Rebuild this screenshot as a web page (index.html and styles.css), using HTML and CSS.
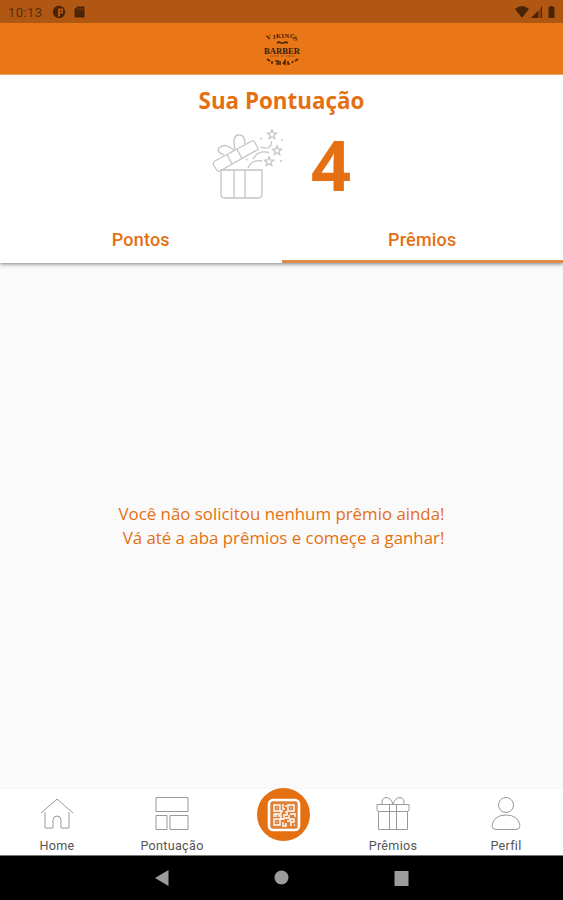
FILE: index.html
```html
<!DOCTYPE html>
<html lang="pt-BR">
<head>
<meta charset="utf-8">
<title>Sua Pontuação</title>
<link rel="stylesheet" href="styles.css">
</head>
<body>
<div class="app">
  <div class="status">
    <span class="clock">10:13</span>
    <svg class="notices" width="36" height="16" viewBox="0 0 36 16">
      <circle cx="7" cy="8" r="6.2"/><path class="cut" d="M6 4.500h5v5H8v3H6z"/><path d="M8 6.500h1.500v1.500H8z"/>
      <path d="M25.500 2.500h6q1 0 1 1v9q0 1-1 1h-8q-1 0-1-1V5.500z"/><path class="slot" d="M26 4v2.500M28.200 4v2.500M30.400 4v2.500"/>
    </svg>
    <svg class="signals" width="44" height="16" viewBox="0 0 44 16">
      <path d="M1 5q7-6 14 0L8 14z"/><path class="faint" d="M28 3v11H17z"/><path d="M24 7v7h-7z"/><path d="M27 3l1-1v12h-1z"/>
      <path d="M34.500 3h1.500V2h3v1h1.500v11h-6z"/>
    </svg>
  </div>
  <header class="topbar">
    <svg width="40" height="40" viewBox="0 0 40 40">
      <path class="thick" d="M15 14l2-1 2 1h3l2-1 2 1"/>
      <path class="thin" d="M8 27h9M24 27h9M19 27h3"/>
      <g class="logo">
        <text x="5" y="11" font-size="6.500" transform="rotate(-18 5 11)">V</text><text x="11" y="9.500" font-size="6.500">I</text><text x="14" y="9" font-size="6.500">K</text><text x="19.500" y="9" font-size="6.500">I</text><text x="22.500" y="9" font-size="6.500">N</text><text x="27.500" y="9" font-size="6.500" transform="rotate(12 27 9)">G</text><text x="31.500" y="11" font-size="6.500" transform="rotate(18 31 10)">S</text>
        <text x="2" y="24.500" font-size="9" textLength="36" lengthAdjust="spacingAndGlyphs">BARBER</text>
      </g>
      <path class="thick" d="M5 30l3 2M10 32v3M13 32h3v3h-2M18 32v4M21 35l2-3v4M26 32v3h2M30 34l1-2M33 32l3-2"/>
    </svg>
  </header>
  <section class="score">
    <h1>Sua Pontuação</h1>
    <div class="points">
      <svg class="gift" width="74" height="72" viewBox="0 0 74 72">
        <path d="M9 42h41v24q0 4-4 4H13q-4 0-4-4zM22 42v28M33 42v28"/>
        <path d="M1.500 37q-1-2.500 1.500-4L40 13q1.500-1 2.500 1l3.500 6q.5 1.500-1 2L8 43q-2.500 1-4-2zM15 26.500l5 9.500M25 21l5 9.500"/>
        <path d="M12 27q-8-3-5-7 5-5 12 0l3 2M23 21q-3-13 3-14 7-1 7 9"/>
        <path d="M48.500 19q11 4 11-6M41 31q5-9 16-6.500M36 40q4-9 14-7"/>
        <path d="M60 2l1.300 3 3.200.3-2.500 2 .8 3.200-2.800-1.700-2.800 1.700.8-3.200-2.500-2 3.200-.3zM65 18l1.300 3 3.200.3-2.500 2 .8 3.200-2.800-1.700-2.800 1.700.8-3.200-2.500-2 3.200-.3zM57 29l1.300 3 3.200.3-2.500 2 .8 3.200-2.800-1.700-2.800 1.700.8-3.200-2.500-2 3.200-.3zM48 10.500h2M69 12h2M68 33h2M34 31.500h1.500"/>
      </svg>
      <strong>4</strong>
    </div>
  </section>
  <nav class="tabs">
    <span class="tab">Pontos</span>
    <span class="tab active">Prêmios</span>
  </nav>
  <main class="empty">
    <p>Você não solicitou nenhum prêmio ainda!</p>
    <p>Vá até a aba prêmios e começe a ganhar!</p>
  </main>
  <nav class="menu">
    <span class="item"><svg width="36" height="36" viewBox="0 0 36 36"><path d="M2 18L18 4l16 14M6 17v16h8V25q0-4 4-4t4 4v8h8V17"/></svg>Home</span>
    <span class="item"><svg width="36" height="36" viewBox="0 0 36 36"><path d="M2 2.500h32v14H2zM2 20.500h11v14H2zM16 20.500h18v14H16z"/></svg>Pontuação</span>
    <span class="scan">
      <svg width="34" height="34" viewBox="0 0 34 34">
        <rect class="plate" x="2" y="2" width="30" height="30" rx="4"/>
        <path d="M7 7h6v6H7zM21 7h6v6h-6zM7 21h6v6H7zM9.500 10h1M23.500 10h1M9.500 24h1M16 6v5h2M16 13h-2v3H7v3M11 18h3v3h3v-4h3v-3h-2M23 16h5v3M22 17v3h-4M20 23h3v-2h4v3h-3v4M16 24v4h3v-3M27 27h1M19 7v2M9 16v3"/>
      </svg>
    </span>
    <span class="item"><svg width="36" height="36" viewBox="0 0 36 36"><path d="M2 9.500h32v5q0 2-2 2H4q-2 0-2-2zM3.500 16.500v18h29v-18M14.500 9.500v25M21.500 9.500v25M18 9Q15.500 2.500 11 2.500 6.500 3 7 9M18 9Q20.500 2.500 25 2.500 29.500 3 29 9"/></svg>Prêmios</span>
    <span class="item"><svg width="36" height="36" viewBox="0 0 36 36"><circle cx="18" cy="10" r="7.500"/><path d="M8 34.500q-4 0-4-4Q6 20 18 20t14 10.500q0 4-4 4z"/></svg>Perfil</span>
  </nav>
  <div class="system">
    <svg width="16" height="18" viewBox="0 0 16 18"><path d="M14.500 1v16L1 9z"/></svg>
    <svg width="16" height="18" viewBox="0 0 16 18"><circle cx="7.500" cy="8.500" r="7"/></svg>
    <svg width="16" height="18" viewBox="0 0 16 18"><path d="M.5 2h14v15H.5z"/></svg>
  </div>
</div>
</body>
</html>
```

FILE: styles.css
```css
* { box-sizing: border-box; }
body { margin: 0; }
svg { display: block; flex: none; }
.app { width: 563px; height: 900px; display: flex; flex-direction: column; background: #fafafa; color: #e47012; font-family: "Open Sans", sans-serif; overflow: hidden; }
.status { height: 23px; flex: none; display: flex; align-items: center; padding: 0 5px 0 8px; background: #b05713; color: #5b2d0b; font: 13px Roboto, sans-serif; }
.clock { width: 44px; letter-spacing: .45px; padding-top: 1px; }
.notices, .signals { fill: #4b2407; }
.signals { margin-left: auto; }
.cut { fill: #b05713; }
.slot { stroke: #93480f; stroke-width: .8; }
.faint { fill: #854110; }
.topbar { height: 52px; flex: none; display: flex; justify-content: center; align-items: center; background: #e97718; border-bottom: 1px solid #eda365; }
.logo { fill: #3a1c08; font-family: "Liberation Serif", serif; font-weight: bold; }
.thin { fill: none; stroke: #a5561a; stroke-width: 1; }
.thick { fill: none; stroke: #4d260a; stroke-width: 1.6; }
.score { height: 142px; flex: none; background: #fff; display: flex; flex-direction: column; align-items: center; position: relative; z-index: 1; }
h1 { margin: 11px 0 0; font-size: 22.4px; line-height: 30px; font-weight: 700; }
.points { display: flex; gap: 25px; margin-top: 12px; height: 74px; align-items: flex-start; }
.gift { fill: none; stroke: #c4c4c4; stroke-width: 1.3; }
.points strong { font-size: 70px; line-height: 73px; }
.tabs { height: 46px; flex: none; display: flex; background: #fff; box-shadow: 0 1px 4px rgba(0,0,0,.5); font: 500 18px Roboto, sans-serif; }
.tab { flex: 1; text-align: center; line-height: 46px; letter-spacing: .2px; }
.active { border-bottom: 3px solid #dc8b4c; }
.empty { flex: 1; padding-top: 239px; text-align: center; }
.empty p { margin: 0; font-size: 16.85px; line-height: 23.5px; }
.empty p + p { padding-left: 4px; }
.menu { height: 68px; flex: none; display: grid; grid-template-columns: 114px 116px 107px 112px 114px; background: #fff; border-top: 1px solid #f6f6f6; border-bottom: 1px solid #777; color: #555; font: 12.6px Roboto, sans-serif; }
.item { display: flex; flex-direction: column; align-items: center; padding-top: 6px; line-height: 30px; letter-spacing: .3px; }
.item svg { fill: none; stroke: #999; stroke-width: 1; }
.scan { width: 53px; height: 53px; margin-top: -1px; justify-self: center; border-radius: 50%; background: #e47012; display: grid; place-items: center; }
.scan svg { fill: none; stroke: #fff; stroke-width: 1.4; }
.scan .plate { fill: #df8038; stroke-width: 2.6; }
.system { height: 44px; flex: none; display: flex; justify-content: center; align-items: center; gap: 104px; background: #000; fill: #9c9c9c; }
```
